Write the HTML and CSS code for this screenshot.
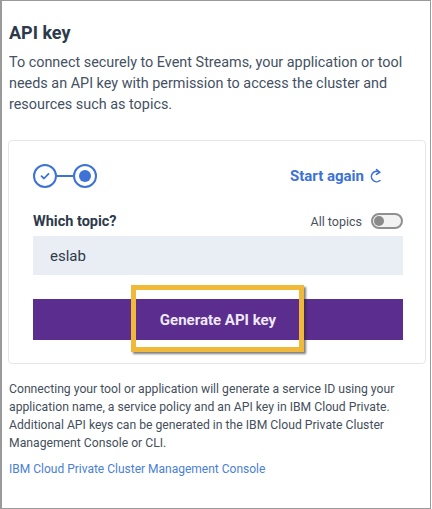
FILE: index.html
```html
<!DOCTYPE html>
<html>
<head>
<meta charset="utf-8">
<link rel="stylesheet" href="styles.css">
</head>
<body>
<div class="frame">
  <h1 class="title">API key</h1>
  <p class="intro">To connect securely to Event Streams, your application or tool needs an API key with permission to access the cluster and resources such as topics.</p>
  <div class="card">
    <div class="card-top">
      <div class="stepper">
        <span class="step done">
          <svg width="12" height="12" viewBox="0 0 12 12"><path d="M2.5 6.2 L5 8.5 L9.5 3.8" fill="none" stroke="#3d72d6" stroke-width="1.8" stroke-linecap="round" stroke-linejoin="round"/></svg>
        </span>
        <span class="step-line"></span>
        <span class="step current"><span class="dot"></span></span>
      </div>
      <a class="start-again">Start again
        <svg width="14" height="16" viewBox="0 0 14 16"><path d="M10.5 4.2 A5.2 5.2 0 1 0 11 12.5" fill="none" stroke="#3d72d6" stroke-width="1.6" stroke-linecap="round"/><path d="M7.6 1.6 L10.8 4.3 L7.4 6.4" fill="none" stroke="#3d72d6" stroke-width="1.6" stroke-linecap="round" stroke-linejoin="round"/></svg>
      </a>
    </div>
    <div class="topic-row">
      <span class="label">Which topic?</span>
      <span class="all-topics">All topics <span class="toggle"><span class="knob"></span></span></span>
    </div>
    <div class="input">eslab</div>
    <div class="btn-wrap">
      <button class="btn">Generate API key</button>
      <span class="highlight"></span>
    </div>
  </div>
  <p class="note">Connecting your tool or application will generate a service ID using your application name, a service policy and an API key in IBM Cloud Private. Additional API keys can be generated in the IBM Cloud Private Cluster Management Console or CLI.</p>
  <a class="link">IBM Cloud Private Cluster Management Console</a>
</div>
</body>
</html>
```

FILE: styles.css
```css
* { box-sizing: border-box; }
html, body { margin: 0; padding: 0; background: #fff; }
body { font-family: Roboto, "Noto Sans", sans-serif; }

.frame {
  width: 431px;
  height: 509px;
  border: 1px solid #9a9a9a;
  border-left: 2px solid #9a9a9a;
  padding: 20px 4px 0 6px;
  display: flex;
  flex-direction: column;
  align-items: stretch;
}

.title {
  margin: 0;
  font-size: 18px;
  line-height: 24px;
  font-weight: 700;
  color: #2d3a4b;
  padding-left: 1px;
}

.intro {
  margin: 7px 0 0;
  font-size: 14.4px;
  line-height: 21px;
  color: #445163;
  padding-left: 1px;
}

.card {
  margin-top: 25px;
  border: 1px solid #e3e6ee;
  border-radius: 4px;
  padding: 23px 22px 23px 24px;
  display: flex;
  flex-direction: column;
}

.card-top {
  display: flex;
  align-items: center;
  justify-content: space-between;
  height: 24px;
}

.stepper { display: flex; align-items: center; }
.step {
  width: 24px; height: 24px;
  border: 2px solid #3d72d6;
  border-radius: 50%;
  display: flex; align-items: center; justify-content: center;
}
.step-line { width: 16px; height: 2px; background: #3d72d6; }
.dot { width: 12px; height: 12px; border-radius: 50%; background: #3d72d6; }

.start-again {
  display: flex;
  align-items: center;
  gap: 5px;
  margin-right: 20px;
  font-size: 15px;
  font-weight: 700;
  color: #3d72d6;
}

.topic-row {
  margin-top: 23px;
  height: 20px;
  display: flex;
  align-items: center;
  justify-content: space-between;
}
.label { font-size: 14.5px; font-weight: 700; color: #2d3a4b; }
.all-topics {
  display: flex; align-items: center; gap: 9px;
  font-size: 12.5px; color: #4a5260;
}
.toggle {
  width: 32px; height: 16px;
  border: 2px solid #8f8f8f;
  border-radius: 8px;
  background: #f2f2f2;
  display: flex; align-items: center; padding-left: 1px;
}
.knob { width: 10px; height: 10px; border-radius: 50%; background: #8a8a8a; }

.input {
  margin-top: 5px;
  height: 39px;
  background: #e9edf4;
  padding-left: 17px;
  display: flex; align-items: center;
  font-size: 15px;
  color: #2f3b4a;
}

.btn-wrap { position: relative; margin-top: 24px; }
.btn {
  display: block;
  width: 100%;
  height: 41px;
  border: 0;
  background: #5b2d8e;
  color: #efe8f6;
  font-family: Roboto, "Noto Sans", sans-serif;
  font-size: 15px;
  font-weight: 700;
}
.highlight {
  position: absolute;
  left: 98px;
  top: -14px;
  width: 173px;
  height: 67px;
  border: 5px solid #f0b93a;
  box-shadow: 2px 2px 2px rgba(40, 40, 40, 0.6);
}

.note {
  margin: 16px 0 0;
  font-size: 12.2px;
  line-height: 18px;
  color: #454f5c;
  padding-left: 1px;
}
.link {
  margin-top: 8px;
  font-size: 12px;
  line-height: 18px;
  color: #4a80d6;
  padding-left: 1px;
}
```
